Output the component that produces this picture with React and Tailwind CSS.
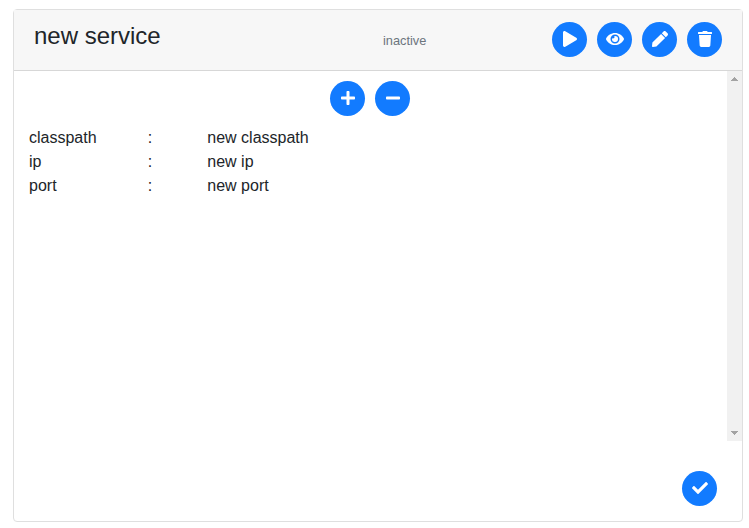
import React from 'react';
import { FaPlay, FaPen, FaPlus, FaMinus, FaCheck, FaEye, FaTrash } from 'react-icons/fa';

function RoundButton({ label, children }) {
  return (
    <button
      type="button"
      aria-label={label}
      className="flex h-[35px] w-[35px] shrink-0 items-center justify-center rounded-full bg-[#127bff] pb-px text-base text-white"
    >
      {children}
    </button>
  );
}

const properties = [
  ['classpath', 'new classpath'],
  ['ip', 'new ip'],
  ['port', 'new port'],
];

export default function App() {
  return (
    <div className="h-[528px] w-[749px] overflow-hidden bg-white pl-[13px] pt-[9px] font-['Liberation_Sans',Arial,sans-serif] text-base text-[#212529]">
      <section className="flex h-[513px] w-[730px] flex-col rounded border border-[#dfdfdf] bg-white">
        <header className="flex h-[61px] shrink-0 border-b border-[#d7d7d7] bg-[#f7f7f7] pl-5 pr-5 pt-3">
          <h4 className="w-[349px] text-2xl leading-[27px]">new service</h4>
          <span className="w-[169px] pt-[9px] text-[12.8px] leading-5 text-[#6c757d]">inactive</span>
          <div className="flex gap-2.5">
            <RoundButton label="Start"><FaPlay className="h-4 w-3.5" /></RoundButton>
            <RoundButton label="View"><FaEye className="h-4 w-[18px]" /></RoundButton>
            <RoundButton label="Edit"><FaPen className="h-4 w-4" /></RoundButton>
            <RoundButton label="Delete"><FaTrash className="h-4 w-3.5" /></RoundButton>
          </div>
        </header>
        <div className="flex h-[370px] shrink-0">
          <div className="flex-1 pl-[15px] pt-2.5">
            <div className="flex gap-2.5 pl-[301px]">
              <RoundButton label="Add"><FaPlus className="h-4 w-3.5" /></RoundButton>
              <RoundButton label="Remove"><FaMinus className="h-4 w-3.5" /></RoundButton>
            </div>
            <div className="grid grid-cols-[118.8px_59.5px_1fr] pt-2.5 leading-6">
              {properties.map(([name, value]) => (
                <React.Fragment key={name}>
                  <span>{name}</span>
                  <span>:</span>
                  <span>{value}</span>
                </React.Fragment>
              ))}
            </div>
          </div>
          <div className="flex w-[15px] flex-col items-center justify-between bg-[#f1f1f1] pb-1.5 pt-1.5">
            <svg width="7" height="4" viewBox="0 0 7 4" fill="#a3a3a3" shapeRendering="crispEdges">
              <path d="M3 0h1v1h1v1h1v1h1v1H0V3h1V2h1V1h1z" />
            </svg>
            <svg width="7" height="4" viewBox="0 0 7 4" fill="#a3a3a3" shapeRendering="crispEdges">
              <path d="M0 0h7v1H6v1H5v1H4v1H3V3H2V2H1V1H0z" />
            </svg>
          </div>
        </div>
        <footer className="flex justify-end pr-[25px] pt-[30px]">
          <RoundButton label="Confirm"><FaCheck className="h-4 w-4" /></RoundButton>
        </footer>
      </section>
    </div>
  );
}
